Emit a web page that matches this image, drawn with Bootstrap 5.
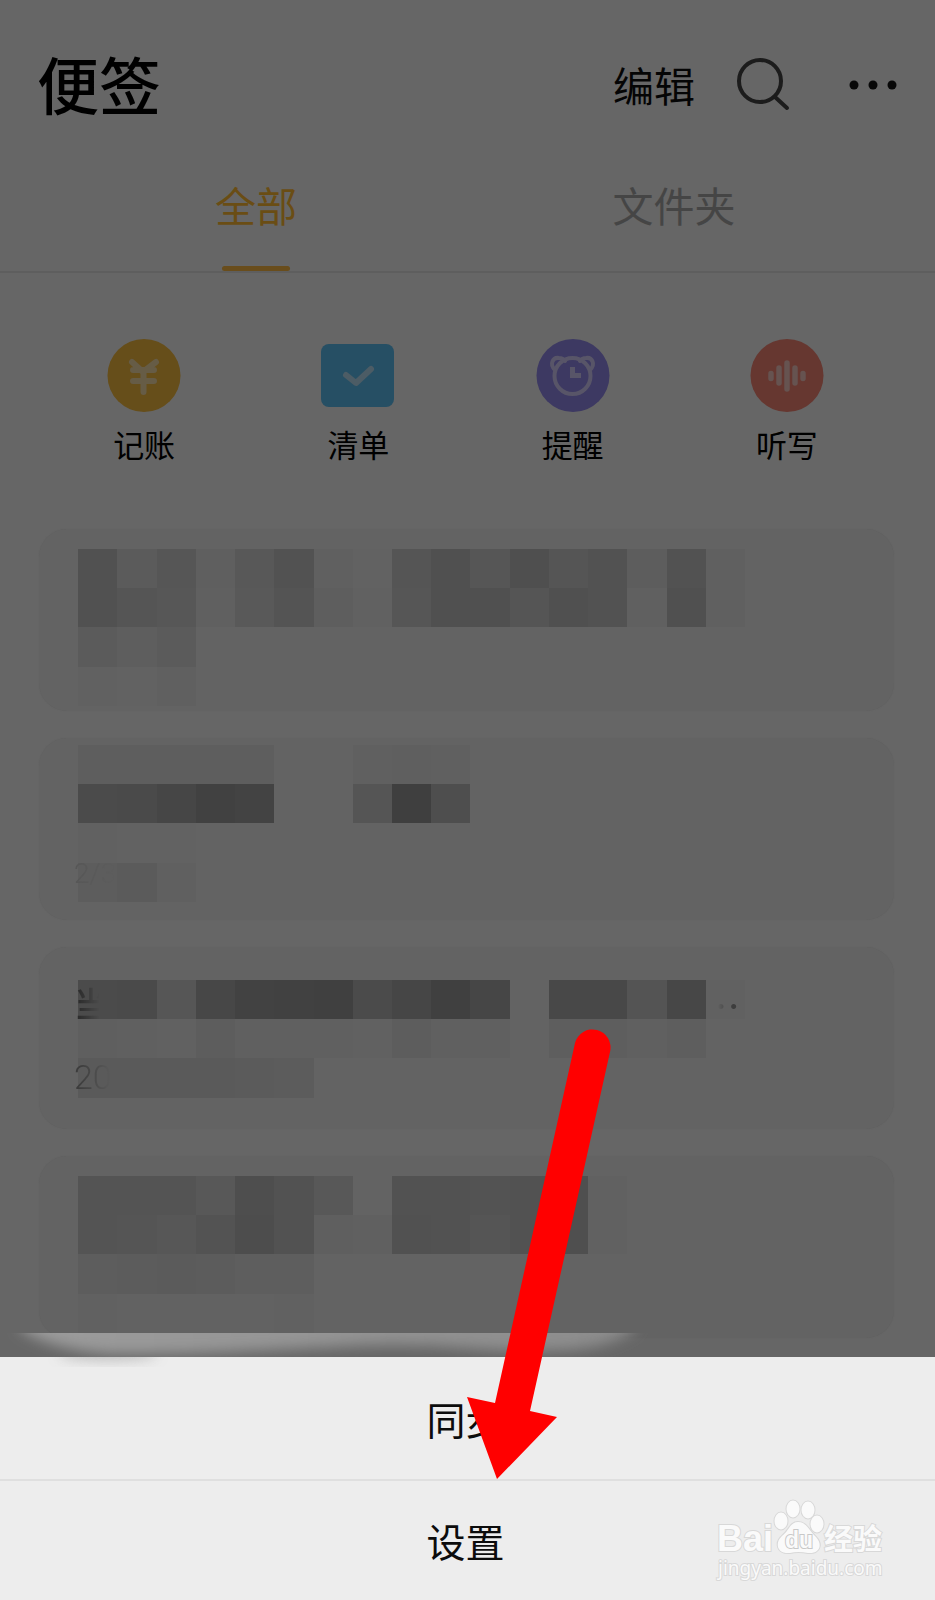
<!DOCTYPE html>
<html lang="zh-CN">
<head>
<meta charset="utf-8">
<meta name="viewport" content="width=device-width, initial-scale=1">
<title>便签</title>
<link href="https://cdn.jsdelivr.net/npm/bootstrap@5.3.0/dist/css/bootstrap.min.css" rel="stylesheet">
<style>
  body { font-family: "Liberation Sans", "Noto Sans CJK SC", sans-serif; background: #666; color: #000; }
  button { background: none; border: 0; padding: 0; color: inherit; }
  .app-head { padding: 40px 34px 0 37px; height: 136px; }
  .app-title { font-size: 62px; line-height: 98px; font-weight: 500; }
  .edit-btn { font-size: 41px; line-height: 96px; color: #050505; }
  .search-btn { margin-left: 40px; }
  .tab-bar { padding: 38px 52px 0 47px; border-bottom: 2px solid #5e5e5e; height: 137px; }
  .tab-btn { font-size: 41px; line-height: 68px; color: #454545; height: 97px; padding-bottom: 29px; }
  .tab-btn.active { color: #6a4d14; padding-bottom: 0; }
  .tab-btn.active::after { content: ""; display: block; width: 68px; height: 5px; margin: 24px auto 0; border-radius: 3px; background: #694d1c; }
  .quick { padding: 66px 41px 0 37px; height: 256px; }
  .quick button { font-size: 31px; line-height: 46px; }
  .quick svg { width: 74px; height: 74px; display: block; margin: 0 auto 11px; }
  .notes { padding: 0 41px 19px 39px; gap: 27px; }
  .note { background: #636363; border-radius: 28px; height: 182px; box-shadow: 0 0 1px #5e5e5e; padding-top: 20px; }
  .note-high { padding-top: 7px; }
  .note-low { padding-top: 33px; }
  .note svg { display: block; width: 100%; }
  .note-title { top: 36px; left: 35px; font-size: 34px; line-height: 44px; font-weight: 500; color: #2b2b2b; -webkit-mask-image: linear-gradient(90deg, #000 10%, transparent 75%); mask-image: linear-gradient(90deg, #000 10%, transparent 75%); }
  .note-more { top: 34px; left: 663px; font-size: 38px; line-height: 48px; color: #3d3d3d; font-family: "Noto Sans CJK SC", sans-serif; -webkit-mask-image: linear-gradient(90deg, transparent 40%, #000 75%); mask-image: linear-gradient(90deg, transparent 40%, #000 75%); }
  .note-date { left: 35px; top: 112px; font-size: 34px; line-height: 36px; color: #3c3c3c; font-family: Roboto, sans-serif; font-weight: 300; -webkit-mask-image: linear-gradient(90deg, #000 10%, transparent 95%); mask-image: linear-gradient(90deg, #000 10%, transparent 95%); }
  .note-faint { top: 120px; font-size: 28px; line-height: 32px; color: #575757; }
  .sheet { background: #ededed; color: #0c0c0c; }
  .sheet button { font-size: 39px; height: 120px; line-height: 60px; padding: 6px 4px 0 0; }
  .sheet button:first-of-type { height: 124px; padding-top: 8px; border-bottom: 2px solid #dfdfdf; }
  .glow { left: 0; bottom: 234px; width: 680px; height: 34px; pointer-events: none; }
  .pointer { left: 50%; bottom: 121px; width: 147px; height: 451px; margin-left: -1px; pointer-events: none; }
  .brand { right: 46px; bottom: 20px; width: 175px; height: 86px; pointer-events: none; }
</style>
</head>
<body>
<div class="min-vh-100 d-flex flex-column">
  <header class="app-head d-flex align-items-start">
    <h1 class="app-title m-0 me-auto">便签</h1>
    <button class="edit-btn" type="button">编辑</button>
    <button type="button" aria-label="搜索" class="search-btn align-self-start">
      <svg class="d-block mt-3" width="64" height="60" viewBox="0 0 64 60" fill="none" stroke="#1c1c1c" stroke-width="4" stroke-linecap="round"><circle cx="25" cy="25" r="21"/><path d="M40 41 52 52"/></svg>
    </button>
    <button type="button" aria-label="更多" class="ms-5">
      <svg class="d-block mt-3" width="54" height="60" viewBox="0 0 54 60" fill="#080808"><circle cx="7" cy="29" r="4.500"/><circle cx="26" cy="29" r="4.500"/><circle cx="45" cy="29" r="4.500"/></svg>
    </button>
  </header>

  <nav class="tab-bar d-flex">
    <button class="tab-btn active w-50" type="button">全部</button>
    <button class="tab-btn w-50" type="button">文件夹</button>
  </nav>

  <section class="quick d-flex align-items-start">
    <button class="w-25" type="button">
      <svg viewBox="0 0 74 74"><circle cx="37" cy="36.500" r="36.500" fill="#664e1a"/><g stroke="#665c46" stroke-width="6" stroke-linecap="round" fill="none"><path d="M25 23 36 33 49 23M26 31H47M26 42H47M36.500 33V53"/></g></svg>记账</button>
    <button class="w-25" type="button">
      <svg viewBox="0 0 74 74"><rect x="0" y="5" width="73" height="63" rx="8" fill="#264f64"/><path d="M25 36 35 44 50 30" fill="none" stroke="#4c5c65" stroke-width="6" stroke-linecap="round" stroke-linejoin="round"/></svg>清单</button>
    <button class="w-25" type="button">
      <svg viewBox="0 0 74 74"><circle cx="37" cy="36.500" r="36.500" fill="#3d3962"/><g fill="none" stroke="#585568" stroke-width="4"><circle cx="36.500" cy="37" r="18"/><path d="M19 31C13 25 17 18 23 19Q27 19 29 22M54 31C60 25 56 18 50 19Q46 19 44 22" stroke-linecap="round"/><path d="M36.500 28V36.500H45" stroke-width="5"/></g></svg>提醒</button>
    <button class="w-25" type="button">
      <svg viewBox="0 0 74 74"><circle cx="37" cy="36.500" r="36.500" fill="#663730"/><path d="M21 34.500V39.500M29 29V44M37 24V50M45 29V44M53 34.500V39.500" stroke="#665350" stroke-width="5.500" stroke-linecap="round"/></svg>听写</button>
  </section>

  <main class="notes d-flex flex-column">
    <article class="note"><svg viewBox="0 0 218 40" data-rows="51 5b 56 5f 58 52 60 62 55 50 56 4f 55 52 5d 52 60|51 55 57 60 59 54 5e 61 56 50 50 55 50 52 60 50 60|5b 5e 5b|61 62 60"></svg></article>
    <article class="note note-high position-relative"><svg viewBox="0 0 218 40" data-rows="5e 5e 5e 5e 5e . . 60 5f 60|4b 4a 46 41 43 . . 55 3f 4e|61 62 62|5d 5b 60"></svg>
      <span class="note-date note-faint position-absolute">2/3</span></article>
    <article class="note note-low position-relative"><svg viewBox="0 0 218 30" data-rows="4b 4a 56 47 42 41 40 4b 46 40 46 . 48 48 54 47 61|5f 60 61 5d 60 60 60 61 5d 60 60 . 5e 5e 60 5e|5a 5a 5a 5a 5b 5c"></svg>
      <span class="note-title position-absolute">当</span><span class="note-more position-absolute">…</span>
      <span class="note-date position-absolute">20</span></article>
    <article class="note"><svg viewBox="0 0 218 40" data-rows="54 54 54 58 4e 52 58 63 52 52 53 52 4f 61|54 55 57 53 4d 52 5f 60 51 52 55 52 4f 61|5d 5c 5b 5c 5e 5e|61 62 62 62 62 61"></svg></article>
  </main>

  <section class="sheet position-relative d-flex flex-column mt-auto">
    <button type="button">同步</button>
    <button type="button">设置</button>
    <svg class="glow position-absolute" viewBox="0 0 680 34" aria-hidden="true">
      <defs>
        <filter id="soft" x="-10%" y="-100%" width="120%" height="300%"><feGaussianBlur stdDeviation="7"/></filter>
        <linearGradient id="fade" x1="0" x2="1"><stop offset="0" stop-color="#9c9c9c"/><stop offset="1" stop-color="#8c8c8c"/></linearGradient>
      </defs>
      <svg width="680" height="24" overflow="hidden"><path d="M20-30V-4Q50 16 110 21C190 22 260 17 330 14Q400 9 470 15Q550 21 590 14Q620 8 635-4V-30Z" fill="url(#fade)" filter="url(#soft)"/></svg>
      <svg y="24" width="680" height="10" overflow="hidden"><ellipse cx="108" cy="-4" rx="50" ry="6" fill="#999" opacity=".7" filter="url(#soft)"/></svg>
    </svg>
    <svg class="brand position-absolute" viewBox="0 0 175 86" role="img" aria-label="Baidu 经验">
      <g fill="#fafafa" stroke="#d8d8d8" stroke-width="2" paint-order="stroke" font-family="Liberation Sans, sans-serif" font-weight="700">
        <text x="3" y="56" font-size="36">Bai</text>
        <ellipse cx="67" cy="26" rx="6.500" ry="8.500"/><ellipse cx="79" cy="14" rx="6.500" ry="8.500"/><ellipse cx="94" cy="15" rx="6.500" ry="8.500"/><ellipse cx="103" cy="29" rx="6.500" ry="8.500"/>
        <path d="M84 27C93 27 95 36 102 42C110 51 104 59 94 58Q84 56 76 58C62 59 61 47 68 41C75 36 76 27 84 27Z"/>
        <text x="71" y="53" font-size="23" stroke="#c8c8c8">du</text>
        <text x="110" y="55" font-size="29" font-family="Noto Sans CJK SC, sans-serif">经验</text>
        <text x="4" y="80" font-size="19" font-weight="400" font-family="Noto Sans, sans-serif">jingyan.baidu.com</text>
      </g>
    </svg>
    <svg class="pointer position-absolute" viewBox="0 0 147 451" fill="red" aria-hidden="true"><path d="M108 14A18 18 0 0 1 143 23L63 382 90 388 30 450 0 368 28 374Z"/></svg>
  </section>
</div>
<script src="https://cdn.jsdelivr.net/npm/bootstrap@5.3.0/dist/js/bootstrap.bundle.min.js"></script>
<script>
  // Each row lists the grey level of one tile; a dot leaves a gap.
  document.querySelectorAll('svg[data-rows]').forEach(svg => {
    svg.setAttribute('shape-rendering', 'crispEdges');
    svg.dataset.rows.split('|').forEach((row, y) => row.split(' ').forEach((g, i) => {
      if (g === '.') return;
      const r = document.createElementNS('http://www.w3.org/2000/svg', 'rect');
      r.setAttribute('x', (i + 1) * 10);
      r.setAttribute('y', y * 10);
      r.setAttribute('width', 10);
      r.setAttribute('height', 10);
      r.setAttribute('fill', '#' + g + g + g);
      svg.append(r);
    }));
  });
</script>
</body>
</html>
